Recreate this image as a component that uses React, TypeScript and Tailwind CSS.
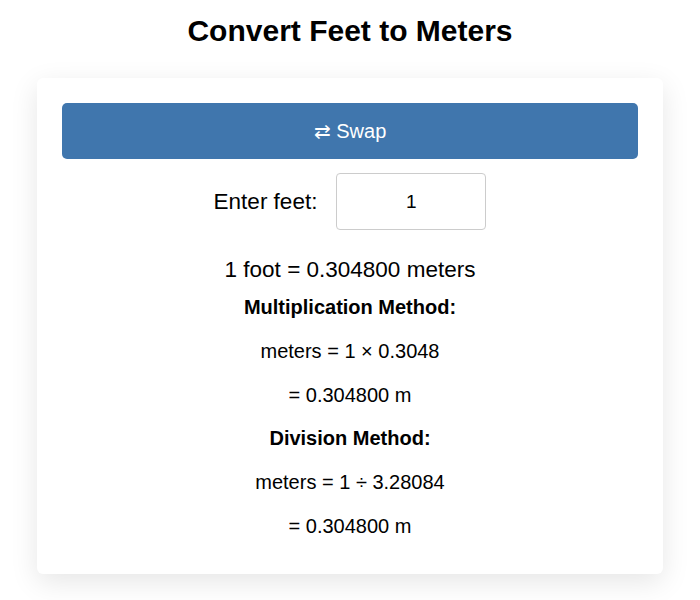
import { useState } from "react";

export default function App() {
  const [feet, setFeet] = useState("1");
  const n = parseFloat(feet) || 0;
  const meters = (n * 0.3048).toFixed(6);

  return (
    <div className="min-h-[600px] bg-white pt-[13px] font-['Liberation_Sans',Arial,sans-serif] text-black">
      <h1 className="text-center text-[30px] font-bold leading-[36px]">Convert Feet to Meters</h1>

      <div className="mx-[37px] mt-[29px] rounded-md bg-white px-[25px] pt-[25px] pb-[25px] shadow-[0_8px_28px_rgba(0,0,0,0.1)]">
        <button className="flex h-[56px] w-full items-center justify-center rounded-[5px] bg-[#4076ad] text-[20px] text-white">
          ⇄ Swap
        </button>

        <div className="mt-[14px] flex items-center justify-center gap-[19px]">
          <label className="text-[22.5px]">Enter feet:</label>
          <input
            value={feet}
            onChange={(e) => setFeet(e.target.value)}
            className="h-[57px] w-[150px] rounded border border-[#ccc] text-center text-[19px] outline-none"
          />
        </div>

        <div className="mt-[24px] text-center text-[22.5px] leading-[32px]">
          {n} foot = {meters} meters
        </div>

        <div className="text-center text-[20px] leading-[43.75px]">
          <div className="font-bold">Multiplication Method:</div>
          <div>meters = {n} × 0.3048</div>
          <div>= {meters} m</div>
          <div className="font-bold">Division Method:</div>
          <div>meters = {n} ÷ 3.28084</div>
          <div>= {meters} m</div>
        </div>
      </div>
    </div>
  );
}
